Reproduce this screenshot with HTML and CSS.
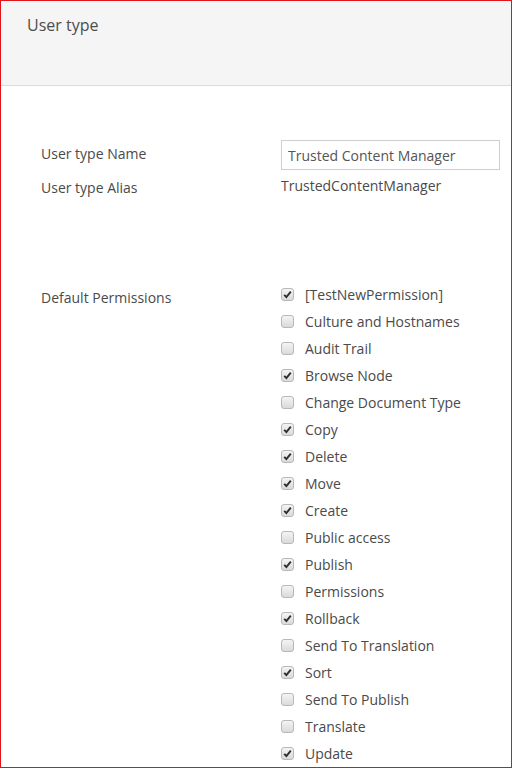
FILE: index.html
```html
<!DOCTYPE html>
<html lang="en">

<head>
    <meta charset="UTF-8">
    <title>User type</title>
    <link rel="stylesheet" href="styles.css">
</head>

<body>
    <div class="frame">
        <div class="header">
            <h1>User type</h1>
        </div>

        <div class="content">
            <div class="row name-row">
                <div class="label">User type Name</div>
                <div class="control">
                    <input type="text" value="Trusted Content Manager">
                </div>
            </div>

            <div class="row alias-row">
                <div class="label">User type Alias</div>
                <div class="control">TrustedContentManager</div>
            </div>

            <div class="row perm-row">
                <div class="label">Default Permissions</div>
                <ul class="perms" id="perms"></ul>
            </div>
        </div>
    </div>

    <script>
        const perms = [
            ['[TestNewPermission]', true],
            ['Culture and Hostnames', false],
            ['Audit Trail', false],
            ['Browse Node', true],
            ['Change Document Type', false],
            ['Copy', true],
            ['Delete', true],
            ['Move', true],
            ['Create', true],
            ['Public access', false],
            ['Publish', true],
            ['Permissions', false],
            ['Rollback', true],
            ['Send To Translation', false],
            ['Sort', true],
            ['Send To Publish', false],
            ['Translate', false],
            ['Update', true]
        ];

        const list = document.getElementById('perms');
        const tick = '<svg width="9" height="9" viewBox="0 0 9 9"><path d="M1.2 4.8 L3.4 7 L7.8 1.6" fill="none" stroke="#2e2e2e" stroke-width="1.9"/></svg>';

        perms.forEach(([name, checked]) => {
            const li = document.createElement('li');
            li.innerHTML = `<span class="box">${checked ? tick : ''}</span><span>${name}</span>`;
            list.appendChild(li);
        });
    </script>
</body>

</html>
```

FILE: styles.css
```css
body {
    margin: 0;
    font-family: "Open Sans", Arial, sans-serif;
    font-size: 14px;
    color: #4a4a4a;
    background: #fff;
}

.frame {
    box-sizing: border-box;
    width: 512px;
    height: 768px;
    border: 1px solid #e0141a;
    overflow: hidden;
}

.header {
    height: 84px;
    background: #f5f5f5;
    border-bottom: 1px solid #dcdcdc;
}

.header h1 {
    margin: 0;
    padding: 13px 26px;
    font-size: 16px;
    font-weight: normal;
    line-height: 22px;
    color: #4d4d4d;
}

.content {
    padding: 54px 0 0 40px;
}

.row {
    display: flex;
    line-height: 20px;
}

.label {
    width: 240px;
    flex-shrink: 0;
}

.name-row .label {
    padding-top: 4px;
}

.name-row input {
    box-sizing: border-box;
    width: 219px;
    height: 30px;
    padding: 0 6px;
    border: 1px solid #cfcfcf;
    font-family: inherit;
    font-size: 14px;
    color: #555;
}

.alias-row {
    margin-top: 6px;
}

.alias-row .label {
    padding-top: 2px;
}

.perm-row {
    margin-top: 83px;
}

.perm-row .label {
    padding-top: 7px;
}

.perms {
    list-style: none;
    margin: 0;
    padding: 0;
}

.perms li {
    display: flex;
    align-items: center;
    height: 27px;
}

.box {
    box-sizing: border-box;
    width: 13px;
    height: 13px;
    margin-right: 11px;
    border: 1px solid #b8b8b8;
    border-radius: 3px;
    background: linear-gradient(#f4f4f4, #dadada);
    display: flex;
    align-items: center;
    justify-content: center;
}
```
